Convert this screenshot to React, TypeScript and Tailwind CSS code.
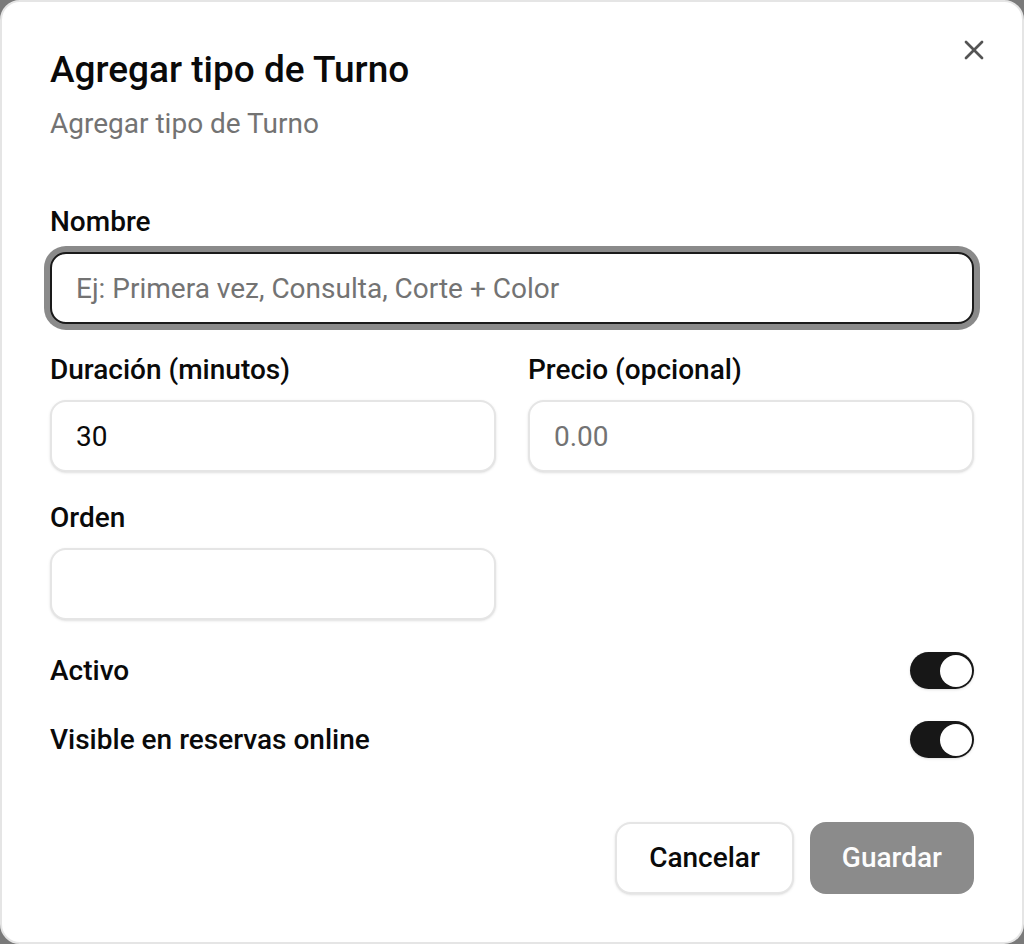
import { X } from "lucide-react"

const font = { fontFamily: "Roboto, 'Noto Sans', sans-serif" }

function Field({ label, placeholder, value, focused }: { label: string; placeholder?: string; value?: string; focused?: boolean }) {
  return (
    <div className="flex flex-col gap-4">
      <label className="text-[28px] leading-none font-medium text-[#0a0a0a]">{label}</label>
      <input
        readOnly
        placeholder={placeholder}
        defaultValue={value}
        className={
          focused
            ? "h-[72px] w-full rounded-[16px] border-2 border-[#1a1a1a] bg-white px-6 text-[28px] text-[#0a0a0a] outline-none ring-[6px] ring-[#8a8a8a] placeholder:text-[#737373]"
            : "h-[72px] w-full rounded-[16px] border-2 border-[#e5e5e5] bg-white px-6 text-[28px] text-[#0a0a0a] shadow-sm outline-none placeholder:text-[#737373]"
        }
      />
    </div>
  )
}

function Toggle({ label }: { label: string }) {
  return (
    <div className="flex items-center justify-between">
      <span className="text-[28px] leading-none font-medium text-[#0a0a0a]">{label}</span>
      <button className="flex h-[37px] w-16 items-center justify-end rounded-full bg-[#171717] px-[2px] shadow-sm">
        <span className="size-8 rounded-full bg-white" />
      </button>
    </div>
  )
}

export default function App() {
  return (
    <div className="h-[944px] w-full bg-[#7a7a7a]" style={font}>
      <div className="relative flex h-full w-full flex-col gap-8 rounded-[20px] border-2 border-[#e5e5e5] bg-white px-12 pt-[50px] pb-12">
        <button className="absolute top-8 right-8 flex size-8 items-center justify-center text-[#545454]">
          <X className="size-8" strokeWidth={2} />
        </button>

        <div className="flex flex-col gap-4">
          <h2 className="text-[37px] leading-[36px] font-medium text-[#0a0a0a]">Agregar tipo de Turno</h2>
          <p className="text-[28px] leading-[40px] text-[#737373]">Agregar tipo de Turno</p>
        </div>

        <div className="flex flex-col gap-8 py-8">
          <Field label="Nombre" placeholder="Ej: Primera vez, Consulta, Corte + Color" focused />
          <div className="grid grid-cols-2 gap-8">
            <Field label="Duración (minutos)" value="30" />
            <Field label="Precio (opcional)" placeholder="0.00" />
          </div>
          <div className="grid grid-cols-2 gap-8">
            <Field label="Orden" />
          </div>
          <Toggle label="Activo" />
          <Toggle label="Visible en reservas online" />
        </div>

        <div className="flex justify-end gap-4">
          <button className="h-[72px] rounded-[16px] border-2 border-[#e5e5e5] bg-white px-8 text-[28px] font-medium text-[#0a0a0a] shadow-sm">
            Cancelar
          </button>
          <button className="h-[72px] rounded-[16px] bg-[#8b8b8b] px-8 text-[28px] font-medium text-[#fdfdfd]">
            Guardar
          </button>
        </div>
      </div>
    </div>
  )
}
